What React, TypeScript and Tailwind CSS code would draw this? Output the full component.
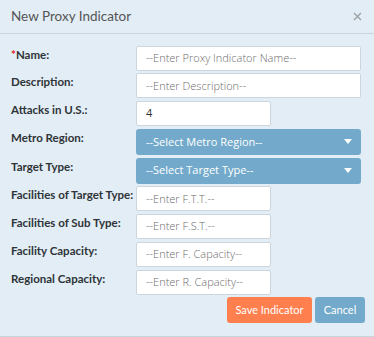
import React from "react";

const lato = { fontFamily: 'Lato, "Open Sans", sans-serif' };
const open = { fontFamily: '"Open Sans", "Noto Sans", sans-serif' };

function Label({ children, required }: { children: React.ReactNode; required?: boolean }) {
  return (
    <div className="w-[125px] shrink-0 whitespace-nowrap pt-[1px] text-[11.5px] font-bold leading-[16px] text-[#2f3438]">
      {required && <span className="text-[#e02020]">*</span>}
      {children}
    </div>
  );
}

function TextInput({ placeholder, value, short }: { placeholder: string; value?: string; short?: boolean }) {
  return (
    <div
      style={open}
      className={
        "flex h-[25px] items-center rounded-[2px] border border-[#cdd6dd] bg-white px-[9px] text-[11px] " +
        (short ? "w-[135px]" : "w-[225px]")
      }
    >
      {value ? (
        <span className="text-[#333]">{value}</span>
      ) : (
        <span className="font-light text-[#6c6c6c]">{placeholder}</span>
      )}
    </div>
  );
}

function SelectBox({ text }: { text: string }) {
  return (
    <div
      style={open}
      className="flex h-[26px] w-[225px] items-center justify-between rounded-[3px] bg-[#73aacb] pl-[10px] pr-[9px] text-[11px] text-white"
    >
      <span>{text}</span>
      <svg width="8" height="5" viewBox="0 0 8 5">
        <path d="M0 0h8L4 5z" fill="white" />
      </svg>
    </div>
  );
}

const rows: { label: string; required?: boolean; field: React.ReactNode }[] = [
  { label: "Name:", required: true, field: <TextInput placeholder="--Enter Proxy Indicator Name--" /> },
  { label: "Description:", field: <TextInput placeholder="--Enter Description--" /> },
  { label: "Attacks in U.S.:", field: <TextInput placeholder="" value="4" short /> },
  { label: "Metro Region:", field: <SelectBox text="--Select Metro Region--" /> },
  { label: "Target Type:", field: <SelectBox text="--Select Target Type--" /> },
  { label: "Facilities of Target Type:", field: <TextInput placeholder="--Enter F.T.T.--" short /> },
  { label: "Facilities of Sub Type:", field: <TextInput placeholder="--Enter F.S.T.--" short /> },
  { label: "Facility Capacity:", field: <TextInput placeholder="--Enter F. Capacity--" short /> },
  { label: "Regional Capacity:", field: <TextInput placeholder="--Enter R. Capacity--" short /> },
];

export default function App() {
  return (
    <div className="h-[337px] w-[374px] overflow-hidden bg-[#e2edf5]" style={lato}>
      {/* Header */}
      <div className="flex h-[34px] items-center justify-between border-b border-[#c8d4dd] pl-[11px] pr-[12px]">
        <span className="text-[13.5px] text-[#555]">New Proxy Indicator</span>
        <svg width="9" height="9" viewBox="0 0 9 9" className="mb-[1px]">
          <path d="M1 1l7 7M8 1L1 8" stroke="#9a9fa3" strokeWidth="1.3" />
        </svg>
      </div>

      {/* Body */}
      <div className="flex flex-col gap-[2.75px] pl-[11px] pr-[9px] pt-[11.5px]">
        {rows.map((r) => (
          <div key={r.label} className="flex">
            <Label required={r.required}>{r.label}</Label>
            {r.field}
          </div>
        ))}
        <div className="flex justify-end gap-[3px]">
          <button className="h-[25.5px] w-[85px] rounded-[3px] bg-[#ff7f4e] text-[11px] text-white">
            Save Indicator
          </button>
          <button className="h-[25.5px] w-[50px] rounded-[3px] bg-[#73aacb] text-[11px] text-white">
            Cancel
          </button>
        </div>
      </div>
      <div className="mt-[13px] border-t border-[#c8d4dd]" />
    </div>
  );
}
